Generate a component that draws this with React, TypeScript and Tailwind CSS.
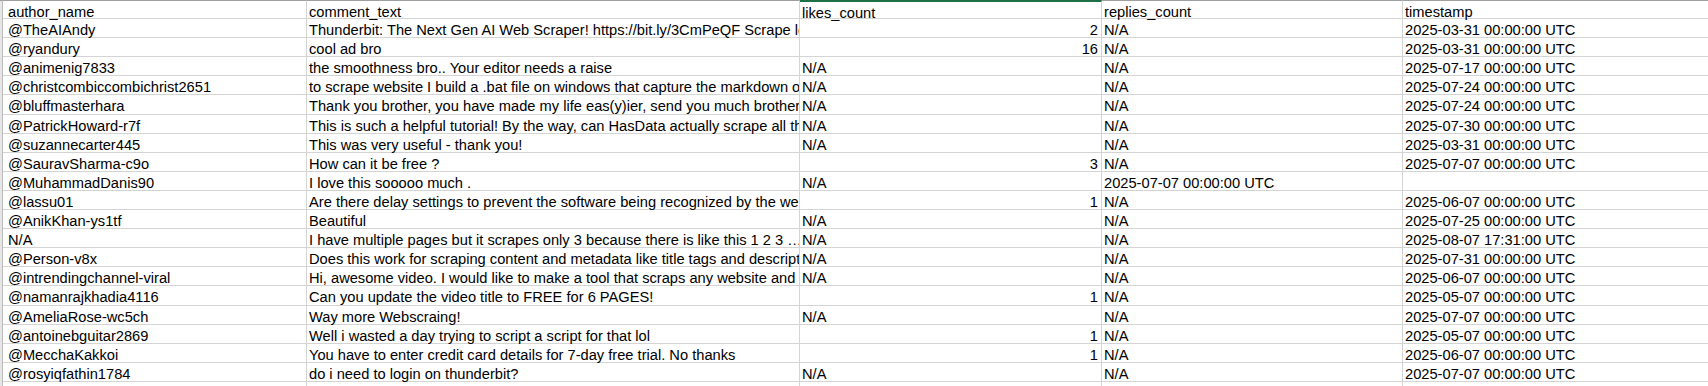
import React from "react";

type Row = [string, string, string, string, string];

const rows: Row[] = [
  ["@TheAIAndy", "Thunderbit: The Next Gen AI Web Scraper! https://bit.ly/3CmPeQF Scrape leads, products and more with AI", "2", "N/A", "2025-03-31 00:00:00 UTC"],
  ["@ryandury", "cool ad bro", "16", "N/A", "2025-03-31 00:00:00 UTC"],
  ["@animenig7833", "the smoothness bro.. Your editor needs a raise", "N/A", "N/A", "2025-07-17 00:00:00 UTC"],
  ["@christcombiccombichrist2651", "to scrape website I build a .bat file on windows that capture the markdown  of the page", "N/A", "N/A", "2025-07-24 00:00:00 UTC"],
  ["@bluffmasterhara", "Thank you brother, you have made my life eas(y)ier, send you much brotherly love", "N/A", "N/A", "2025-07-24 00:00:00 UTC"],
  ["@PatrickHoward-r7f", "This is such a helpful tutorial! By the way, can HasData actually scrape all that data", "N/A", "N/A", "2025-07-30 00:00:00 UTC"],
  ["@suzannecarter445", "This was very useful - thank you!", "N/A", "N/A", "2025-03-31 00:00:00 UTC"],
  ["@SauravSharma-c9o", "How can it be free ?", "3", "N/A", "2025-07-07 00:00:00 UTC"],
  ["@MuhammadDanis90", "I love this sooooo much .", "N/A", "2025-07-07 00:00:00 UTC", ""],
  ["@lassu01", "Are there delay settings to prevent the software being recognized by the website", "1", "N/A", "2025-06-07 00:00:00 UTC"],
  ["@AnikKhan-ys1tf", "Beautiful", "N/A", "N/A", "2025-07-25 00:00:00 UTC"],
  ["N/A", "I have multiple pages but it scrapes only 3 because there is like this 1 2 3 \u2026 The", "N/A", "N/A", "2025-08-07 17:31:00 UTC"],
  ["@Person-v8x", "Does this work for scraping content and metadata like title tags and description", "N/A", "N/A", "2025-07-31 00:00:00 UTC"],
  ["@intrendingchannel-viral", "Hi, awesome video. I would like to make a tool that scraps any website and get the data", "N/A", "N/A", "2025-06-07 00:00:00 UTC"],
  ["@namanrajkhadia4116", "Can you update the video title to FREE for 6 PAGES!", "1", "N/A", "2025-05-07 00:00:00 UTC"],
  ["@AmeliaRose-wc5ch", "Way more Webscraing!", "N/A", "N/A", "2025-07-07 00:00:00 UTC"],
  ["@antoinebguitar2869", "Well i wasted a day trying to script a script for that lol", "1", "N/A", "2025-05-07 00:00:00 UTC"],
  ["@MecchaKakkoi", "You have to enter credit card details for 7-day free trial. No thanks", "1", "N/A", "2025-06-07 00:00:00 UTC"],
  ["@rosyiqfathin1784", "do i need to login on thunderbit?", "N/A", "N/A", "2025-07-07 00:00:00 UTC"],
  ["", "", "", "", ""],
];

const isNum = (s: string) => /^\d+$/.test(s);

const cellBase =
  "h-[19.1px] shrink-0 border-r border-b border-[#d4d4d4] overflow-x-clip whitespace-nowrap pt-[3px] leading-[16px]";

function Cells({ r, header }: { r: Row; header?: boolean }) {
  const top = header ? "border-t border-t-[#9f9f9f] pt-[2px]" : "";
  return (
    <div className="flex">
      <div className={`${cellBase} ${top} w-[304px] pl-[5px]`}>{r[0]}</div>
      <div className={`${cellBase} ${top} w-[493px] pl-[2px]`}>{r[1]}</div>
      <div
        className={`${cellBase} ${
          header ? "border-t-2 border-t-[#1e7145] pt-[1px]" : ""
        } w-[302px] px-[2px] ${isNum(r[2]) ? "text-right pr-[3px]" : ""}`}
      >
        {r[2]}
      </div>
      <div className={`${cellBase} ${top} w-[301px] pl-[2px]`}>{r[3]}</div>
      <div className={`${cellBase} ${top} w-[310px] pl-[2px]`}>{r[4]}</div>
    </div>
  );
}

export default function App() {
  return (
    <div
      className="w-[1708px] h-[386px] overflow-hidden bg-white text-black flex"
      style={{ fontFamily: '"Liberation Sans", Arial, sans-serif', fontSize: "14.67px" }}
    >
      <div className="w-[3px] shrink-0 bg-[#e6e6e6] border-r border-[#bcbcbc] border-t border-t-[#9f9f9f]" />
      <div className="flex flex-col">
        <Cells header r={["author_name", "comment_text", "likes_count", "replies_count", "timestamp"]} />
        {rows.map((r, i) => (
          <Cells key={i} r={r} />
        ))}
      </div>
    </div>
  );
}
